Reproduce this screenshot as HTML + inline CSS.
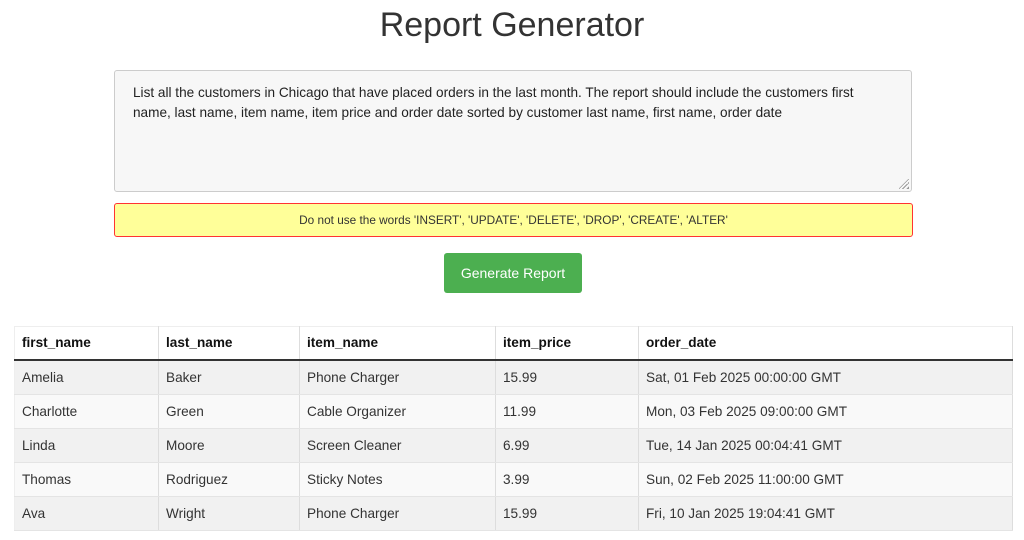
<!DOCTYPE html>
<html><head><style>
body{margin:0;background:#fff;font-family:"Liberation Sans",Arial,sans-serif;color:#333;width:1024px;height:540px;overflow:hidden;position:relative}
h1{position:absolute;top:4px;left:0;width:1024px;text-align:center;margin:0;font-weight:normal;font-size:34px;line-height:42px;color:#333}
.ta{position:absolute;left:114px;top:70px;width:796px;height:120px;border:1px solid #ccc;background:#f7f7f7;border-radius:3px;box-sizing:content-box}
.ta p{margin:0;padding:12px 18px;font-size:13.6px;line-height:20px;color:#222}
.grip{position:absolute;right:2px;bottom:2px;width:10px;height:10px;background:linear-gradient(135deg,transparent 45%,#999 45%,#999 52%,transparent 52%,transparent 65%,#999 65%,#999 72%,transparent 72%,transparent 85%,#999 85%)}
.warn{position:absolute;left:114px;top:203px;width:797px;height:32px;border:1px solid #f33;background:#ffff99;border-radius:3px;text-align:center;font-size:11.8px;line-height:32px;color:#333}
.btn{position:absolute;left:444px;top:253px;width:138px;height:40px;background:#4caf50;color:#fff;border-radius:3px;text-align:center;font-size:14px;line-height:40px}
table{position:absolute;left:14px;top:326px;width:999px;border-collapse:collapse;font-size:13.6px;table-layout:fixed}
th,td{text-align:left;padding:0 7px;border-right:1px solid #ddd;height:33px;line-height:16px}
th{font-weight:bold;color:#111;background:#fff;border-bottom:2px solid #333;border-top:1px solid #eee;height:32px}
td{color:#333;border-bottom:1px solid #e4e4e4}
tr:nth-child(odd) td{background:#f1f1f1}
tr:nth-child(even) td{background:#f9f9f9}
th:first-child,td:first-child{border-left:1px solid #eee}
</style></head><body>
<h1>Report Generator</h1>
<div class="ta"><p>List all the customers in Chicago that have placed orders in the last month. The report should include the customers first name, last name, item name, item price and order date sorted by customer last name, first name, order date</p><div class="grip"></div></div>
<div class="warn">Do not use the words 'INSERT', 'UPDATE', 'DELETE', 'DROP', 'CREATE', 'ALTER'</div>
<div class="btn">Generate Report</div>
<table>
<colgroup><col style="width:144px"><col style="width:141px"><col style="width:196px"><col style="width:143px"><col></colgroup>
<thead><tr><th>first_name</th><th>last_name</th><th>item_name</th><th>item_price</th><th>order_date</th></tr></thead>
<tbody>
<tr><td>Amelia</td><td>Baker</td><td>Phone Charger</td><td>15.99</td><td>Sat, 01 Feb 2025 00:00:00 GMT</td></tr>
<tr><td>Charlotte</td><td>Green</td><td>Cable Organizer</td><td>11.99</td><td>Mon, 03 Feb 2025 09:00:00 GMT</td></tr>
<tr><td>Linda</td><td>Moore</td><td>Screen Cleaner</td><td>6.99</td><td>Tue, 14 Jan 2025 00:04:41 GMT</td></tr>
<tr><td>Thomas</td><td>Rodriguez</td><td>Sticky Notes</td><td>3.99</td><td>Sun, 02 Feb 2025 11:00:00 GMT</td></tr>
<tr><td>Ava</td><td>Wright</td><td>Phone Charger</td><td>15.99</td><td>Fri, 10 Jan 2025 19:04:41 GMT</td></tr>
</tbody></table>
</body></html>
